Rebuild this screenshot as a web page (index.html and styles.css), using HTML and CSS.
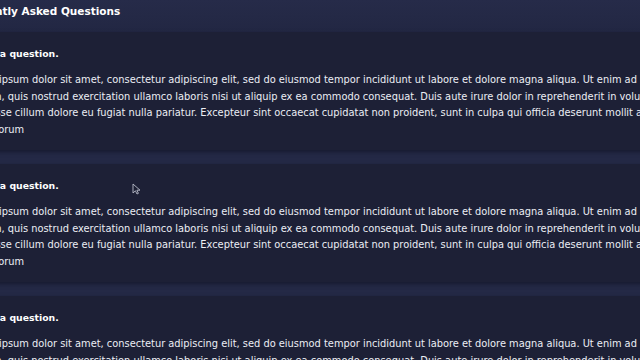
FILE: index.html
```html
<!DOCTYPE html>
<html>
  <head>
    <title>FAQ</title>
    <link rel="stylesheet" href="styles.css">
  </head>

  <body>
    <div class="page">
      <header class="faq-header">
        <h1>Frequently Asked Questions</h1>
      </header>

      <div class="faq-list">
        <div class="faq-item">
          <h2>This is a question.</h2>
          <p>Lorem ipsum dolor sit amet, consectetur adipiscing elit, sed do eiusmod tempor incididunt ut labore et dolore magna aliqua. Ut enim ad minim veniam, quis nostrud exercitation ullamco laboris nisi ut aliquip ex ea commodo consequat. Duis aute irure dolor in reprehenderit in voluptate velit esse cillum dolore eu fugiat nulla pariatur. Excepteur sint occaecat cupidatat non proident, sunt in culpa qui officia deserunt mollit anim id est laborum</p>
        </div>
        <div class="faq-item">
          <h2>This is a question.</h2>
          <p>Lorem ipsum dolor sit amet, consectetur adipiscing elit, sed do eiusmod tempor incididunt ut labore et dolore magna aliqua. Ut enim ad minim veniam, quis nostrud exercitation ullamco laboris nisi ut aliquip ex ea commodo consequat. Duis aute irure dolor in reprehenderit in voluptate velit esse cillum dolore eu fugiat nulla pariatur. Excepteur sint occaecat cupidatat non proident, sunt in culpa qui officia deserunt mollit anim id est laborum</p>
        </div>
        <div class="faq-item">
          <h2>This is a question.</h2>
          <p>Lorem ipsum dolor sit amet, consectetur adipiscing elit, sed do eiusmod tempor incididunt ut labore et dolore magna aliqua. Ut enim ad minim veniam, quis nostrud exercitation ullamco laboris nisi ut aliquip ex ea commodo consequat. Duis aute irure dolor in reprehenderit in voluptate velit esse cillum dolore eu fugiat nulla pariatur. Excepteur sint occaecat cupidatat non proident, sunt in culpa qui officia deserunt mollit anim id est laborum</p>
        </div>
      </div>
    </div>

    <!-- mouse pointer left over in the capture -->
    <svg class="cursor" width="9" height="12" viewBox="0 0 9 12">
      <path d="M1 1 L1 10 L3.4 7.8 L5 11 L6.4 10.3 L4.9 7.2 L8 7.2 Z" fill="#1c1f33" stroke="#b9bccb" stroke-width="0.9" />
    </svg>
  </body>
</html>
```

FILE: styles.css
```css
body {
  font-family: "DejaVu Sans", Arial, sans-serif;
  background-color: #242946;
  color: #eceef4;
  margin: 0;
  overflow: hidden;
  position: relative;
}

.page {
  margin-left: -35px;
  width: 718px;
}

.faq-header {
  height: 32px;
  background: linear-gradient(#262b49, #222743);
  display: flex;
  align-items: center;
}

.faq-header h1 {
  margin: 0 0 10px -11px;
  font-size: 10.5px;
  font-weight: bold;
  color: #ffffff;
}

.faq-list {
  display: flex;
  flex-direction: column;
  gap: 14px;
}

.faq-item {
  background-color: #1d2036;
  height: 118px;
  box-sizing: border-box;
  padding: 14px 0 12px 0;
  box-shadow: 0 2px 4px rgba(10, 12, 25, 0.5);
}

.faq-item h2 {
  margin: 0 0 10px -2px;
  font-size: 9.3px;
  line-height: 16px;
  font-weight: bold;
  color: #ffffff;
}

.faq-item p {
  margin: 0;
  font-size: 9.85px;
  line-height: 16.7px;
}

.cursor {
  position: absolute;
  left: 132px;
  top: 183px;
}
```
